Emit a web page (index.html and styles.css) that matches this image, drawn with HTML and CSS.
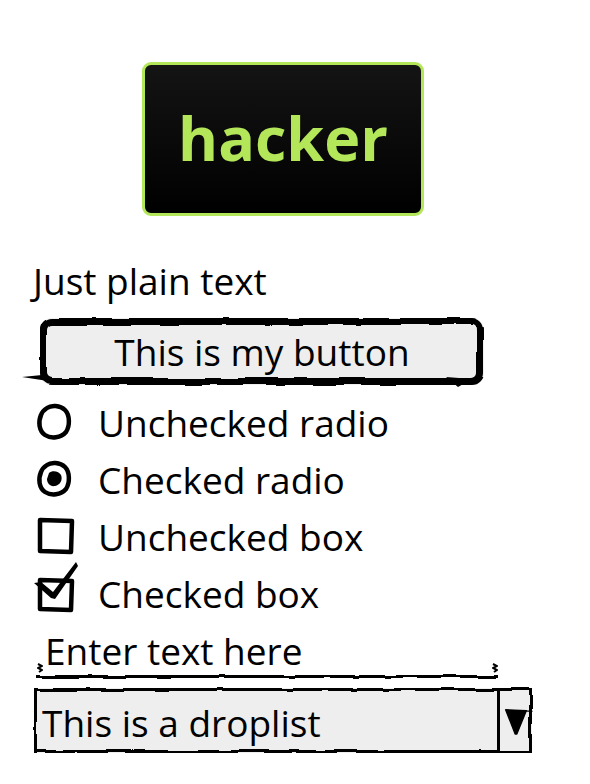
FILE: index.html
```html
<!DOCTYPE html>
<html>
<head>
<meta charset="utf-8">
<link rel="stylesheet" href="styles.css">
</head>
<body>
<svg class="defs" width="0" height="0">
  <filter id="rough" x="-5%" y="-20%" width="110%" height="140%">
    <feTurbulence type="fractalNoise" baseFrequency="0.03" numOctaves="2" seed="3" result="n"/>
    <feDisplacementMap in="SourceGraphic" in2="n" scale="5" xChannelSelector="R" yChannelSelector="G"/>
  </filter>
</svg>
<main class="page">
  <div class="logo"><span class="logo-text">hacker</span></div>
  <p class="plain">Just plain text</p>
  <div class="btn">
    <svg class="btn-tail" viewBox="0 0 30 20"><path d="M0 14 L20 12 L24 4 L26 18 Z" fill="#000"/></svg>
    <svg class="btn-tail-r" viewBox="0 0 30 20"><path d="M2 6 L28 8 L14 16 Z" fill="#000"/></svg>
    This is my button
  </div>
  <ul class="opts">
    <li class="opt">
      <svg class="icon" viewBox="0 0 40 40"><path d="M13 6 C17 3 26 3 31 8 C36 13 36 24 32 30 C27 36 17 37 11 33 C5 29 4 20 7 13 C8 10 10 8 13 6 Z" fill="none" stroke="#000" stroke-width="4.5" stroke-linejoin="round"/></svg>
      <span>Unchecked radio</span>
    </li>
    <li class="opt">
      <svg class="icon" viewBox="0 0 40 40"><path d="M13 6 C17 3 26 3 31 8 C36 13 36 24 32 30 C27 36 17 37 11 33 C5 29 4 20 7 13 C8 10 10 8 13 6 Z" fill="none" stroke="#000" stroke-width="4.5" stroke-linejoin="round"/><path d="M15 14 C18 11 25 12 27 16 C29 21 26 26 21 27 C16 28 13 24 13 20 Z" fill="#000"/></svg>
      <span>Checked radio</span>
    </li>
    <li class="opt">
      <svg class="icon" viewBox="0 0 40 40"><path d="M6 4 L38 5 L37 36 L6 35 Z" fill="none" stroke="#000" stroke-width="4.5" stroke-linejoin="round"/></svg>
      <span>Unchecked box</span>
    </li>
    <li class="opt">
      <svg class="icon" viewBox="0 0 40 40"><path d="M6 7 L38 8 L37 37 L6 36 Z" fill="none" stroke="#000" stroke-width="4.5" stroke-linejoin="round"/><path d="M0 10 L7 9 L19 19 L42 -11 L44 -7 L21 26 L17 25 Z" fill="#000"/></svg>
      <span>Checked box</span>
    </li>
  </ul>
  <div class="input">
    <svg class="tick tick-l" viewBox="0 0 6 10"><path d="M1 1 L5 3 L1 5 L5 7 L2 9" fill="none" stroke="#000" stroke-width="2"/></svg>
    <svg class="tick tick-r" viewBox="0 0 6 10"><path d="M1 1 L5 3 L1 5 L5 7 L2 9" fill="none" stroke="#000" stroke-width="2"/></svg>
    Enter text here
  </div>
  <div class="select">
    <span class="select-text">This is a droplist</span>
    <span class="select-btn"><svg class="arrow" viewBox="0 0 30 32"><path d="M3 3 L27 4 L16 31 L14 31 Z" fill="#000" stroke="#000" stroke-width="1.5" stroke-linejoin="round"/><path d="M20 4 L34 5" stroke="#000" stroke-width="1.5"/></svg></span>
  </div>
</main>
</body>
</html>
```
FILE: styles.css
```css
html, body {
  margin: 0;
  padding: 0;
  background: #fff;
}
.defs {
  position: absolute;
}
.page {
  font-family: "Open Sans", "Noto Sans", sans-serif;
  font-size: 37px;
  color: #000;
  padding: 62px 0 0 0;
  display: flex;
  flex-direction: column;
}
.logo {
  margin-left: 142px;
  width: 276px;
  height: 148px;
  border: 3px solid #b4e65a;
  border-radius: 9px;
  background: linear-gradient(#141414, #000);
  display: flex;
  align-items: center;
  justify-content: center;
}
.logo-text {
  color: #b4e65a;
  font-weight: 700;
  font-size: 61px;
  line-height: 1;
  margin-bottom: 4px;
}
.plain {
  margin: 40px 0 0 33px;
  line-height: 50px;
}
.btn {
  position: relative;
  margin: 12px 0 0 40px;
  width: 444px;
  height: 67px;
  box-sizing: border-box;
  background: #eee;
  border-radius: 12px;
  display: flex;
  align-items: center;
  justify-content: center;
  line-height: 50px;
}
.btn::before {
  content: "";
  position: absolute;
  inset: 0;
  border: 7px solid #000;
  border-radius: 12px;
  filter: url(#rough);
}
.btn-tail {
  position: absolute;
  left: -18px;
  bottom: 2px;
  width: 30px;
  height: 20px;
}
.btn-tail-r {
  position: absolute;
  right: 10px;
  bottom: -6px;
  width: 30px;
  height: 20px;
}
.opts {
  list-style: none;
  margin: 12px 0 0 0;
  padding: 0;
  display: flex;
  flex-direction: column;
  gap: 7px;
}
.opt {
  display: flex;
  align-items: center;
  gap: 24px;
  height: 50px;
  padding-left: 34px;
}
.icon {
  width: 40px;
  height: 40px;
  overflow: visible;
}
.input {
  position: relative;
  margin: 8px 0 0 36px;
  width: 462px;
  padding-left: 9px;
  box-sizing: border-box;
  line-height: 50px;
  height: 50px;
}
.input::after {
  content: "";
  position: absolute;
  left: 0;
  right: 0;
  bottom: -2px;
  border-top: 3px solid #000;
  filter: url(#rough);
}
.tick {
  position: absolute;
  bottom: 3px;
  width: 6px;
  height: 10px;
}
.tick-l {
  left: 1px;
}
.tick-r {
  right: 0;
}
.select {
  position: relative;
  margin: 12px 0 0 34px;
  width: 498px;
  height: 65px;
  box-sizing: border-box;
  background: #eee;
  display: flex;
  align-items: center;
}
.select::before {
  content: "";
  position: absolute;
  inset: 0;
  border: 3px solid #000;
  filter: url(#rough);
}
.select-text {
  flex: 1;
  padding: 4px 0 0 8px;
  line-height: 50px;
}
.select-btn {
  width: 32px;
  align-self: stretch;
  border-left: 3px solid #000;
  display: flex;
  align-items: center;
  justify-content: center;
}
.arrow {
  width: 26px;
  height: 30px;
  overflow: visible;
}
```
